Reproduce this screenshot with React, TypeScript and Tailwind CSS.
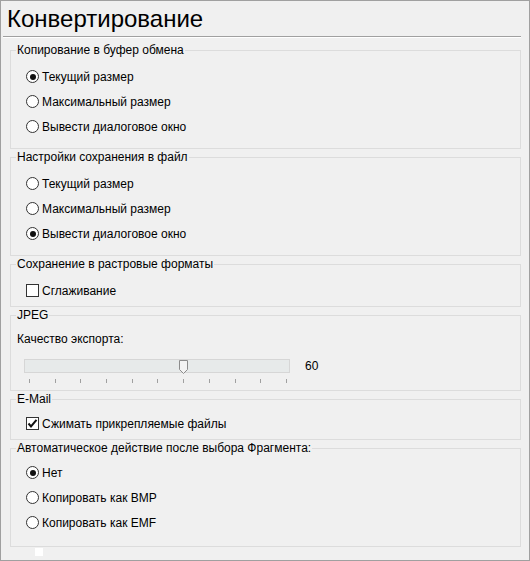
import { type ReactNode } from "react";

const font = { fontFamily: '"Liberation Sans", Arial, sans-serif' };

function Group({ title, children, className }: { title: string; children: ReactNode; className: string }) {
  return (
    <fieldset className={`ml-[9px] mr-[8px] border border-[#dcdcdc] px-0 min-w-0 ${className}`}>
      <legend className="ml-[5px] px-[1px] text-[12px] leading-[16px] text-black">{title}</legend>
      {children}
    </fieldset>
  );
}

function Radio({ label, checked = false }: { label: string; checked?: boolean }) {
  return (
    <div className="flex h-[25px] items-center pl-[15px]">
      <span className="flex h-[13px] w-[13px] items-center justify-center rounded-full border border-[#333333] bg-white">
        {checked && <span className="h-[6px] w-[6px] rounded-full bg-[#111111]" />}
      </span>
      <span className="ml-[3px] text-[12px] text-black">{label}</span>
    </div>
  );
}

function Check({ label, checked = false }: { label: string; checked?: boolean }) {
  return (
    <div className="flex h-[25px] items-center pl-[15px]">
      <span className="flex h-[13px] w-[13px] items-center justify-center border border-[#333333] bg-white">
        {checked && (
          <svg width="11" height="11" viewBox="0 0 11 11">
            <path d="M1.5 5.5 L4 8.5 L9.5 1.8" fill="none" stroke="#111" strokeWidth="2" />
          </svg>
        )}
      </span>
      <span className="ml-[3px] text-[12px] text-black">{label}</span>
    </div>
  );
}

export default function App() {
  const ticks = Array.from({ length: 11 }, (_, i) => i);
  const value = 60;

  return (
    <div
      className="box-border flex h-[561px] w-[530px] flex-col border border-[#a0a0a0] bg-[#f0f0f0]"
      style={font}
    >
      <div className="h-[35px] pl-[6px] text-[24px] leading-[36px] text-black">Конвертирование</div>
      <div className="ml-[2px] mr-[8px] border-t border-b border-t-[#a0a0a0] border-b-white" />

      <div className="mt-[4px]">
        <Group title="Копирование в буфер обмена" className="pt-[6px] pb-[9px]">
          <Radio label="Текущий размер" checked />
          <Radio label="Максимальный размер" />
          <Radio label="Вывести диалоговое окно" />
        </Group>

        <Group title="Настройки сохранения в файл" className="pt-[6px] pb-[9px]">
          <Radio label="Текущий размер" />
          <Radio label="Максимальный размер" />
          <Radio label="Вывести диалоговое окно" checked />
        </Group>

        <Group title="Сохранение в растровые форматы" className="pt-[6px] pb-[3px]">
          <Check label="Сглаживание" />
        </Group>

        <Group title="JPEG" className="pt-[6px] pb-[7px]">
          <div className="h-[20px] pl-[6px] text-[12px] leading-[20px] text-black">Качество экспорта:</div>
          <div className="mt-[10px] flex items-center pl-[13px]">
            <div className="relative h-[14px] w-[266px] border border-[#d6d6d6] bg-[#e7eaea]">
              <svg
                className="absolute top-[0px]"
                style={{ left: `${(value / 100) * 257}px` }}
                width="9"
                height="14"
                viewBox="0 0 9 14"
              >
                <path d="M0.5 0.5 H8.5 V9.5 L4.5 13.5 L0.5 9.5 Z" fill="#f3f3f3" stroke="#8c8c8c" />
              </svg>
            </div>
            <span className="ml-[15px] text-[12px] leading-[14px] text-black">{value}</span>
          </div>
          <div className="mt-[6px] ml-[18px] flex h-[4px] w-[258px] justify-between">
            {ticks.map((t) => (
              <span key={t} className="h-[4px] w-[1px] bg-[#a0a0a0]" />
            ))}
          </div>
        </Group>

        <Group title="E-Mail" className="pt-[4px] pb-[3px]">
          <Check label="Сжимать прикрепляемые файлы" checked />
        </Group>

        <Group title="Автоматическое действие после выбора Фрагмента:" className="pt-[4px] pb-[11px]">
          <Radio label="Нет" checked />
          <Radio label="Копировать как BMP" />
          <Radio label="Копировать как EMF" />
        </Group>

        <div className="ml-[34px] mt-[1px] h-[8px] w-[8px] bg-white" />
      </div>
    </div>
  );
}
